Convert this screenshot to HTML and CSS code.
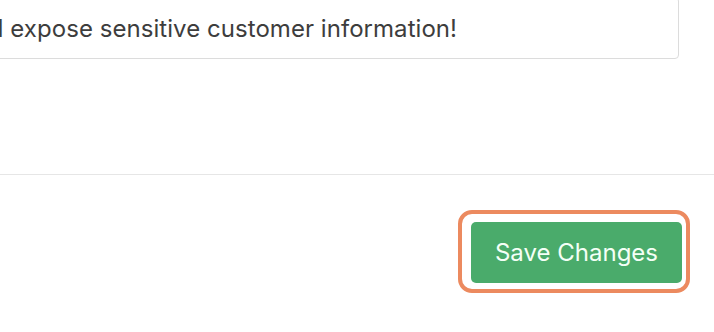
FILE: index.html
```html
<!DOCTYPE html>
<html>
<head>
<meta charset="utf-8">
<link rel="stylesheet" href="styles.css">
</head>
<body>
<div class="modal">
  <div class="modal-body">
    <div class="field">would expose sensitive customer information!</div>
  </div>
  <div class="modal-footer">
    <button class="btn-save">Save Changes</button>
  </div>
</div>
</body>
</html>
```
FILE: styles.css
```css
html, body {
  margin: 0;
  padding: 0;
  background: #ffffff;
  font-family: Inter, "Noto Sans", sans-serif;
  overflow: hidden;
}
.modal {
  width: 714px;
  height: 332px;
  display: flex;
  flex-direction: column;
}
.modal-body {
  height: 174px;
  padding-right: 35px;
  box-sizing: border-box;
}
.field {
  margin-top: -3px;
  margin-left: -75px;
  height: 62px;
  box-sizing: border-box;
  border: 1px solid #dcdcdc;
  border-radius: 4px;
  display: flex;
  align-items: center;
  padding-left: 9px;
  padding-top: 0;
  font-size: 24px;
  letter-spacing: 0.05px;
  color: #3d3d3d;
  white-space: nowrap;
  overflow: hidden;
}
.modal-footer {
  border-top: 1px solid #e6e6e6;
  display: flex;
  justify-content: flex-end;
  padding-top: 47px;
  padding-right: 32px;
}
.btn-save {
  position: relative;
  width: 211px;
  height: 61px;
  border: none;
  border-radius: 5px;
  background: #4aab6b;
  color: #f4fff6;
  font-family: Inter, "Noto Sans", sans-serif;
  font-size: 24px;
  padding: 0;
}
.btn-save::after {
  content: "";
  position: absolute;
  left: -13px;
  top: -12px;
  right: -8px;
  bottom: -10px;
  border: 4px solid #ec8a5f;
  border-radius: 14px;
}
```
